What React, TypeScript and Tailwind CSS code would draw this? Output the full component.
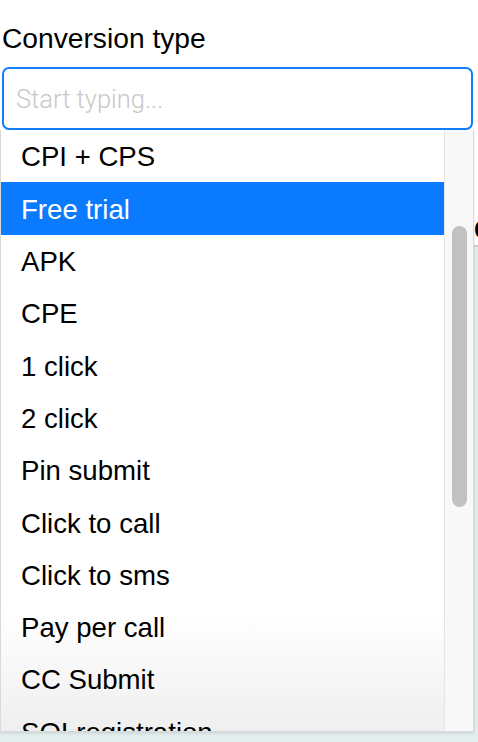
import React from 'react';

const options = [
  'CPI + CPS',
  'Free trial',
  'APK',
  'CPE',
  '1 click',
  '2 click',
  'Pin submit',
  'Click to call',
  'Click to sms',
  'Pay per call',
  'CC Submit',
  'SOI registration',
  'DOI registration',
];

function App() {
  const active = 'Free trial';

  return (
    <div
      className="relative h-[742px] w-[478px] overflow-hidden bg-white text-black"
      style={{ fontFamily: '"Liberation Sans", Arial, sans-serif' }}
    >
      {/* form behind the dropdown */}
      <div className="flex h-full flex-col">
        <label className="block pl-[2px] pt-[22px] text-[28.2px] leading-[32px]">Conversion type</label>
        <div className="mt-[13px] px-[2px] pr-[5px]">
          <input
            placeholder="Start typing..."
            className="h-[63px] w-full rounded-[7px] border-2 border-[#127ef9] bg-white px-[12px] text-[25.5px] font-light outline-none placeholder:text-[#c8c8c8]"
            style={{ fontFamily: 'Roboto, "Liberation Sans", sans-serif' }}
          />
        </div>
        <div className="mt-[88px] h-[24px] pl-[474px] text-[27px] font-bold leading-[24px]">C</div>
        <div className="mt-[3px] flex-1 border-t-2 border-[#c9cfcf] bg-[#e3eded]" />
      </div>

      {/* open dropdown list */}
      <div className="absolute left-0 top-[130px] flex h-[602px] w-[474px] border border-t-0 border-[#d6dada] bg-white shadow-[0_1px_3px_rgba(0,0,0,0.12)]">
        <ul className="flex-1 overflow-hidden bg-[linear-gradient(to_bottom,#ffffff_80%,#efefef)]">
          {options.map((o) => (
            <li
              key={o}
              className={`flex h-[52.3px] items-center pl-[20px] pt-[2px] text-[27.6px] ${
                o === active ? 'bg-[#0a7bff] text-white' : 'text-black'
              }`}
            >
              {o}
            </li>
          ))}
        </ul>
        <div className="w-[29px] border-l border-[#e6e6e6] bg-[#f8f8f8] pl-[7px] pt-[96px]">
          <div className="h-[281px] w-[15px] rounded-full bg-[#c1c1c1]" />
        </div>
      </div>
    </div>
  );
}

export default App;
